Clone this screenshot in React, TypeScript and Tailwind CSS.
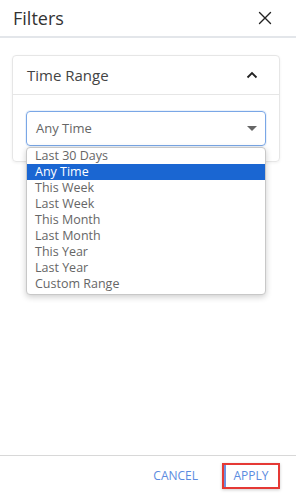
import React from "react";

const options = [
  "Last 30 Days",
  "Any Time",
  "This Week",
  "Last Week",
  "This Month",
  "Last Month",
  "This Year",
  "Last Year",
  "Custom Range",
];

export default function App() {
  return (
    <div
      className="w-[296px] h-[496px] bg-white flex flex-col text-[#333]"
      style={{ fontFamily: '"Open Sans", "Noto Sans", sans-serif' }}
    >
      <div className="h-[38px] shrink-0 flex items-center justify-between pl-[13px] pr-[24px] border-b-2 border-[#e3e6ea]">
        <span className="text-[18px] leading-none text-[#333]">Filters</span>
        <svg width="14" height="14" viewBox="0 0 14 14" className="text-[#222]">
          <path d="M1.5 1.5L12.5 12.5M12.5 1.5L1.5 12.5" stroke="currentColor" strokeWidth="1.4" strokeLinecap="round" />
        </svg>
      </div>
      <div className="flex-1 pl-[12px] pr-[16px] pt-[17px]">
        <div className="border border-[#e6e6e6] rounded-[4px] shadow-[0_1px_3px_rgba(0,0,0,0.06)]">
          <div className="h-[39px] flex items-center justify-between pl-[14px] pr-[21px] border-b border-[#e6e6e6]">
            <span className="text-[15px] text-[#444]">Time Range</span>
            <svg width="12" height="8" viewBox="0 0 12 8" className="text-[#222]">
              <path d="M1.5 6.5L6 2L10.5 6.5" stroke="currentColor" strokeWidth="1.8" fill="none" />
            </svg>
          </div>
          <div className="pl-[13px] pr-[13px] pt-[16px] pb-[15px]">
            <div className="relative">
              <div className="h-[35px] border border-[#7aa7e6] rounded-[4px] flex items-center justify-between pl-[9px] pr-[8px] shadow-[0_0_0_1px_rgba(122,167,230,0.15)]">
                <span className="text-[13px] text-[#666]">Any Time</span>
                <svg width="10" height="6" viewBox="0 0 10 6">
                  <path d="M0 0H10L5 5Z" fill="#666" />
                </svg>
              </div>
              <div className="absolute left-0 right-0 top-[36px] bg-white border border-[#c8c8c8] rounded-[4px] shadow-[0_2px_6px_rgba(0,0,0,0.2)] pb-[2px] z-10">
                {options.map((o) => (
                  <div
                    key={o}
                    className={
                      "h-[16px] flex items-center pl-[8px] text-[12.5px] leading-none " +
                      (o === "Any Time" ? "bg-[#1a66d2] text-white" : "text-[#666]")
                    }
                  >
                    {o}
                  </div>
                ))}
              </div>
            </div>
          </div>
        </div>
      </div>
      <div className="h-[41px] shrink-0 border-t border-[#d8d8d8] flex items-center justify-end pr-[16px] gap-[24px]">
        <span className="text-[12px] text-[#5b8be0]">CANCEL</span>
        <div className="w-[58px] h-[26px] border-2 border-[#e53935] flex items-center justify-center shadow-[inset_2px_0_0_#6f8fe0,0_1px_3px_rgba(0,0,0,0.2)]">
          <span className="text-[12px] text-[#5b8be0]">APPLY</span>
        </div>
      </div>
    </div>
  );
}
